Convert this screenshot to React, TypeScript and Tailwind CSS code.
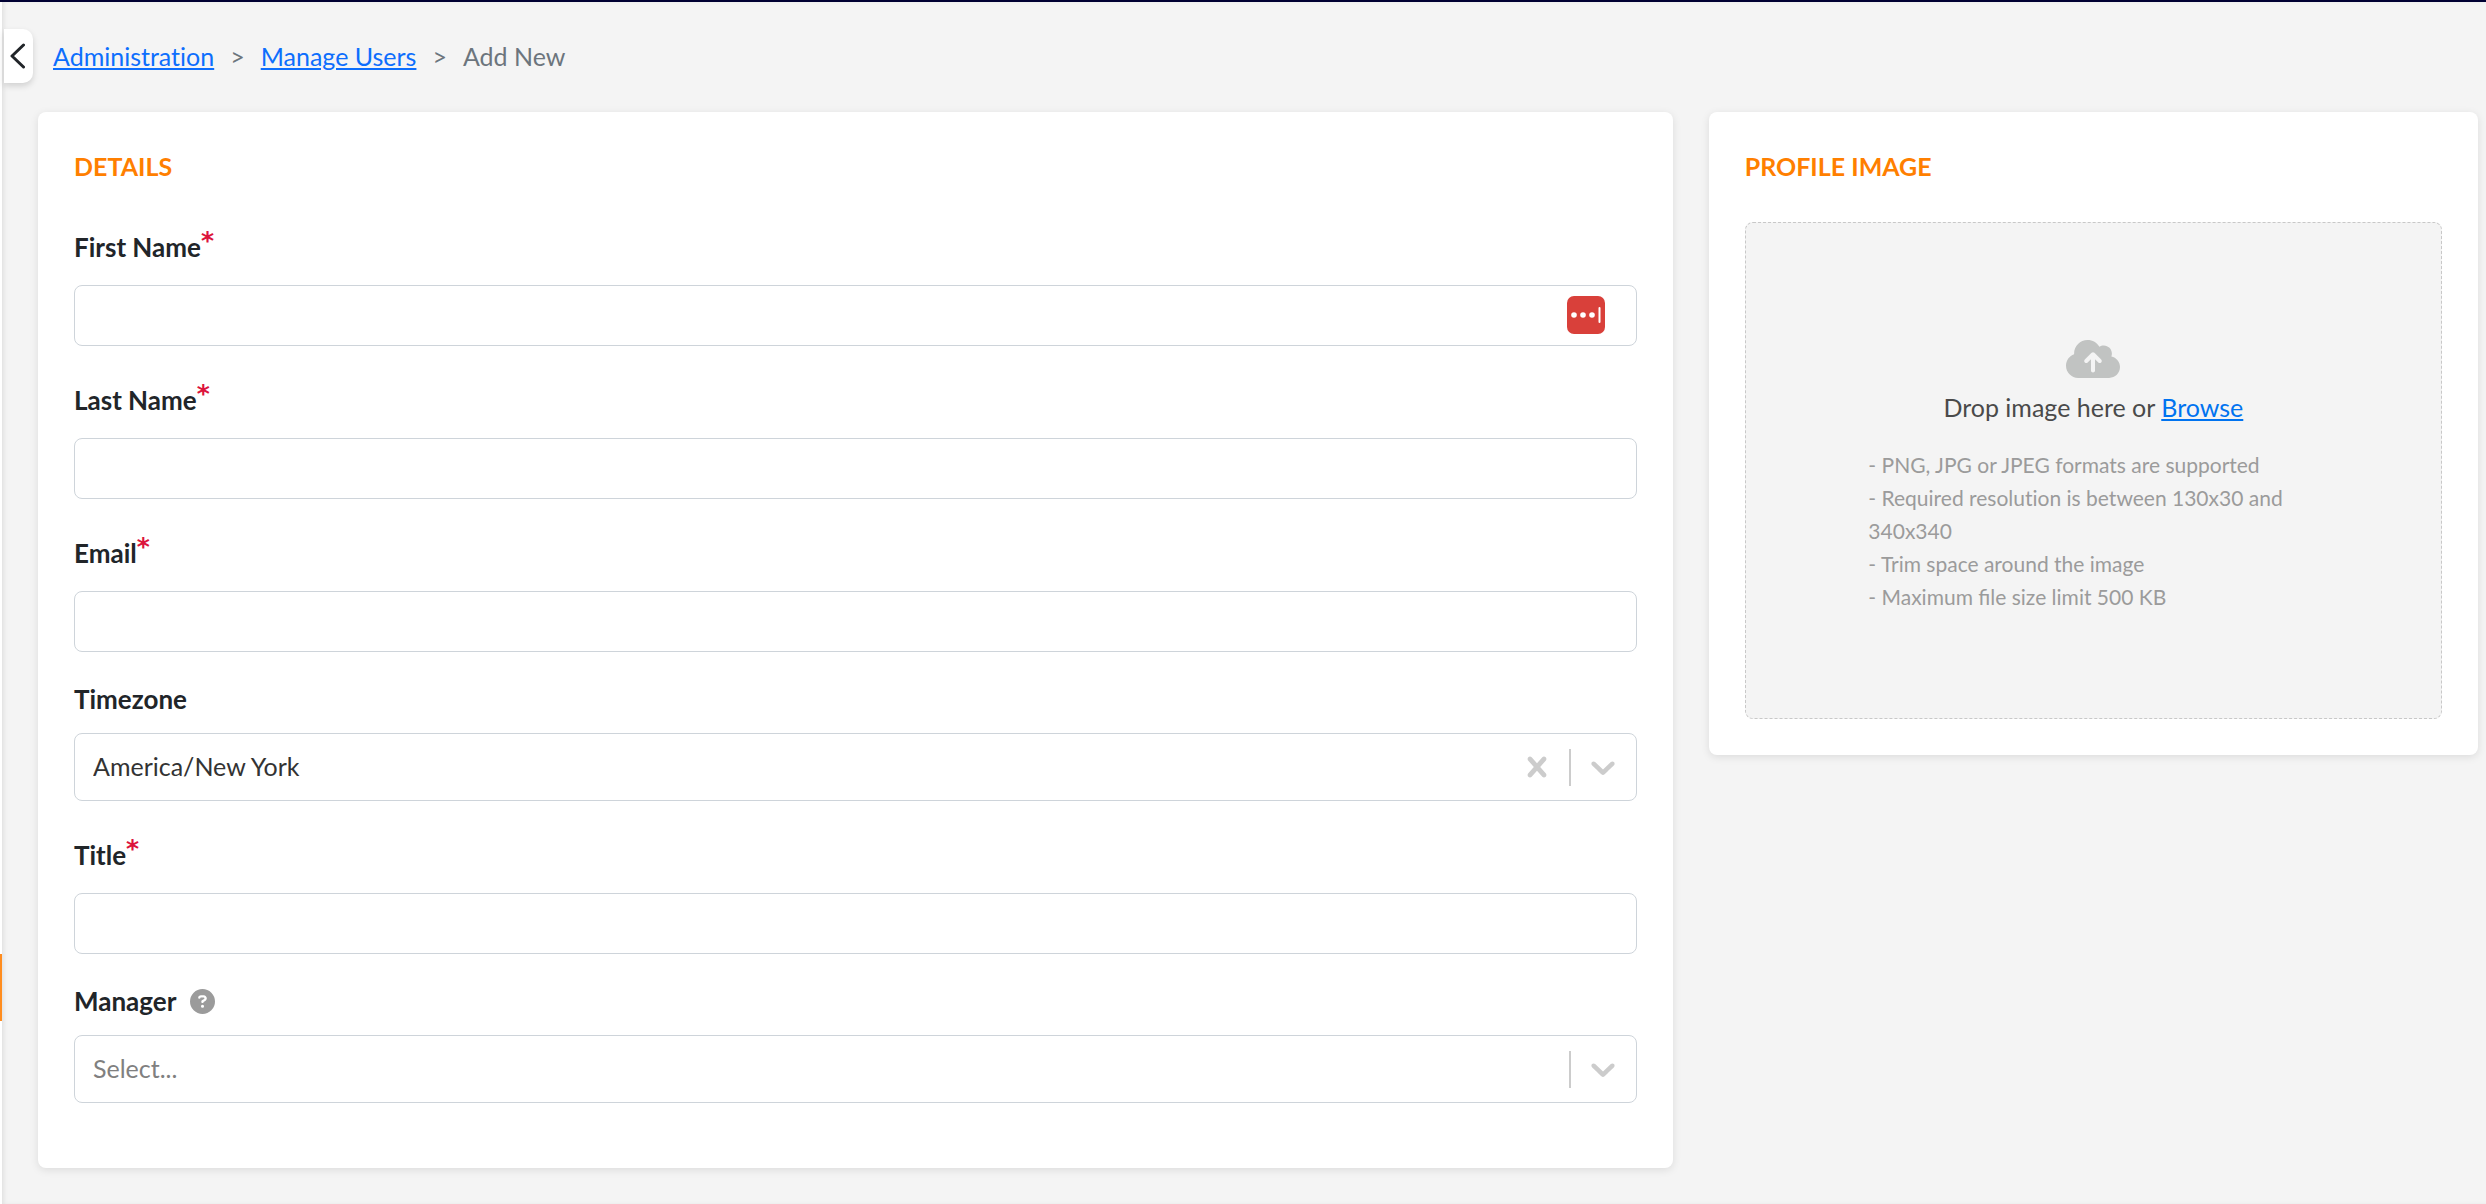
import { type ReactNode } from "react";
import { FaCircleQuestion, FaCloudArrowUp } from "react-icons/fa6";

const CHEVRON =
  "M4.516 7.548c0.436-0.446 1.043-0.481 1.576 0l3.908 3.747 3.908-3.747c0.533-0.481 1.141-0.446 1.574 0 0.436 0.445 0.408 1.197 0 1.615-0.406 0.418-4.695 4.502-4.695 4.502-0.217 0.223-0.502 0.335-0.787 0.335s-0.57-0.112-0.789-0.335c0 0-4.287-4.084-4.695-4.502s-0.436-1.17 0-1.615z";
const CROSS =
  "M14.348 14.849c-0.469 0.469-1.229 0.469-1.697 0l-2.651-3.030-2.651 3.029c-0.469 0.469-1.229 0.469-1.697 0-0.469-0.469-0.469-1.229 0-1.697l2.758-3.15-2.759-3.152c-0.469-0.469-0.469-1.228 0-1.697s1.228-0.469 1.697 0l2.652 3.031 2.651-3.031c0.469-0.469 1.228-0.469 1.697 0s0.469 1.229 0 1.697l-2.758 3.152 2.758 3.15c0.469 0.469 0.469 1.229 0 1.698z";

function Card({ title, children }: { title: string; children: ReactNode }) {
  return (
    <section className="rounded-lg bg-white px-9 pt-9 shadow-[0_2px_8px_rgba(0,0,0,0.1)]">
      <h2 className="text-[25px] leading-9 font-bold text-[#ff7f00]">{title}</h2>
      {children}
    </section>
  );
}

function Label({ id, text, required, children }: { id: string; text: string; required?: boolean; children?: ReactNode }) {
  return (
    <div className="flex h-9 items-center gap-3.5">
      <label htmlFor={id} className="flex text-[26px] leading-9 font-bold text-[#212529]">
        {text}
        {required && <span className="-mt-1.5 font-['DejaVu_Sans',sans-serif] text-[25px] text-[#dc143c]">*</span>}
      </label>
      {children}
    </div>
  );
}

function TextField({ id, label, type = "text", children }: { id: string; label: string; type?: string; children?: ReactNode }) {
  return (
    <div>
      <Label id={id} text={label} required />
      <div className="relative mt-5">
        <input
          id={id}
          type={type}
          required
          className="block h-[61px] w-full rounded-lg border border-[#ced4da] bg-white px-4 text-[25px] text-[#333] outline-none"
        />
        {children}
      </div>
    </div>
  );
}

function SelectField({
  id,
  label,
  value,
  placeholder,
  extra,
}: {
  id: string;
  label: string;
  value: string;
  placeholder?: boolean;
  extra?: ReactNode;
}) {
  return (
    <div>
      <Label id={id} text={label}>
        {extra}
      </Label>
      <div className="relative mt-4">
        <select
          id={id}
          className={`block h-[68px] w-full appearance-none rounded-lg border border-[#ced4da] bg-white pr-32 pl-[18px] text-[25px] outline-none ${
            placeholder ? "text-[#808080]" : "text-[#333]"
          }`}
        >
          <option>{value}</option>
        </select>
        <div className="pointer-events-none absolute inset-y-0 right-3.5 flex items-center text-[#ccc]">
          {!placeholder && (
            <button type="button" aria-label="Clear timezone" className="pointer-events-auto mr-3">
              <svg viewBox="0 0 20 20" className="size-10" fill="currentColor">
                <path d={CROSS} />
              </svg>
            </button>
          )}
          <span className="mr-3 h-[37px] w-0.5 bg-[#ccc]" />
          <svg viewBox="0 0 20 20" className="size-10" fill="currentColor">
            <path d={CHEVRON} />
          </svg>
        </div>
      </div>
    </div>
  );
}

export default function App() {
  return (
    <div className="flex min-h-screen flex-col border-t-2 border-[#000033] bg-[#f4f4f4] font-['Lato',sans-serif]">
      <div className="relative flex-1 border-l-2 border-white shadow-[inset_3px_0_4px_-1px_rgba(0,0,0,0.08)]">
        <span className="absolute top-[952px] -left-0.5 h-[67px] w-0.5 bg-[#ff8c1e]" />

        <header className="flex items-center gap-5 pt-[27px] pl-0.5">
          <button
            type="button"
            aria-label="Collapse sidebar"
            className="flex h-[54px] w-[29px] items-center justify-center rounded-r-[10px] bg-white pr-[3px] shadow-[0_3px_6px_rgba(0,0,0,0.15)]"
          >
            <svg viewBox="0 0 15 26" className="h-[26px] w-[15px]" fill="none" stroke="#212529" strokeWidth="3" strokeLinecap="round" strokeLinejoin="round">
              <path d="M13.5 2 2 13l11.5 11" />
            </svg>
          </button>
          <nav
            aria-label="Breadcrumb"
            className="flex items-center gap-4 text-[25px] leading-9 text-[#6c757d] [font-variant-ligatures:none]"
          >
            <a href="#administration" className="text-[#0d6efd] underline">
              Administration
            </a>
            <span>&gt;</span>
            <a href="#manage-users" className="text-[#0d6efd] underline">
              Manage Users
            </a>
            <span>&gt;</span>
            <span>Add New</span>
          </nav>
        </header>

        <main className="mt-[29px] grid grid-cols-[17fr_8fr] items-start gap-9 pr-2 pb-[35px] pl-9">
          <Card title="DETAILS">
            <form className="flex flex-col pt-[45px] pb-[65px]">
              <div className="flex flex-col gap-9">
                <TextField id="first-name" label="First Name">
                  <svg viewBox="0 0 38 38" className="absolute top-[11px] right-8 size-[38px]">
                    <rect width="38" height="38" rx="7" fill="#d9403a" />
                    <g fill="#fff">
                      <circle cx="7" cy="19" r="2.8" />
                      <circle cx="16" cy="19" r="2.8" />
                      <circle cx="25" cy="19" r="2.8" />
                      <rect x="31.5" y="11" width="2" height="16" rx="1" />
                    </g>
                  </svg>
                </TextField>
                <TextField id="last-name" label="Last Name" />
                <TextField id="email" label="Email" type="email" />
              </div>
              <div className="mt-[29px] flex flex-col gap-9">
                <SelectField id="timezone" label="Timezone" value="America/New York" />
                <TextField id="title" label="Title" />
              </div>
              <div className="mt-[29px]">
                <SelectField
                  id="manager"
                  label="Manager"
                  value="Select..."
                  placeholder
                  extra={<FaCircleQuestion className="size-[25px] text-[#9b9b9b]" />}
                />
              </div>
            </form>
          </Card>

          <Card title="PROFILE IMAGE">
            <div className="pt-[38px] pb-9">
              <div className="flex h-[497px] flex-col items-center rounded-lg border border-dashed border-[#c8c8c8] bg-[#f4f4f4] pt-[109px]">
                <FaCloudArrowUp className="size-[54px] text-[#c1c3c2]" />
                <p className="mt-[3px] text-[25px] leading-9 text-[#4a4a4a]">
                  Drop image here or{" "}
                  <a href="#browse" className="text-[#0073f0] underline">
                    Browse
                  </a>
                </p>
                <ul className="mt-[23px] w-[450px] text-[21px] leading-[33px] text-[#9b9b9b]">
                  <li>- PNG, JPG or JPEG formats are supported</li>
                  <li className="[font-variant-ligatures:none]">- Required resolution is between 130x30 and 340x340</li>
                  <li>- Trim space around the image</li>
                  <li>- Maximum file size limit 500 KB</li>
                </ul>
              </div>
            </div>
          </Card>
        </main>
      </div>
    </div>
  );
}
